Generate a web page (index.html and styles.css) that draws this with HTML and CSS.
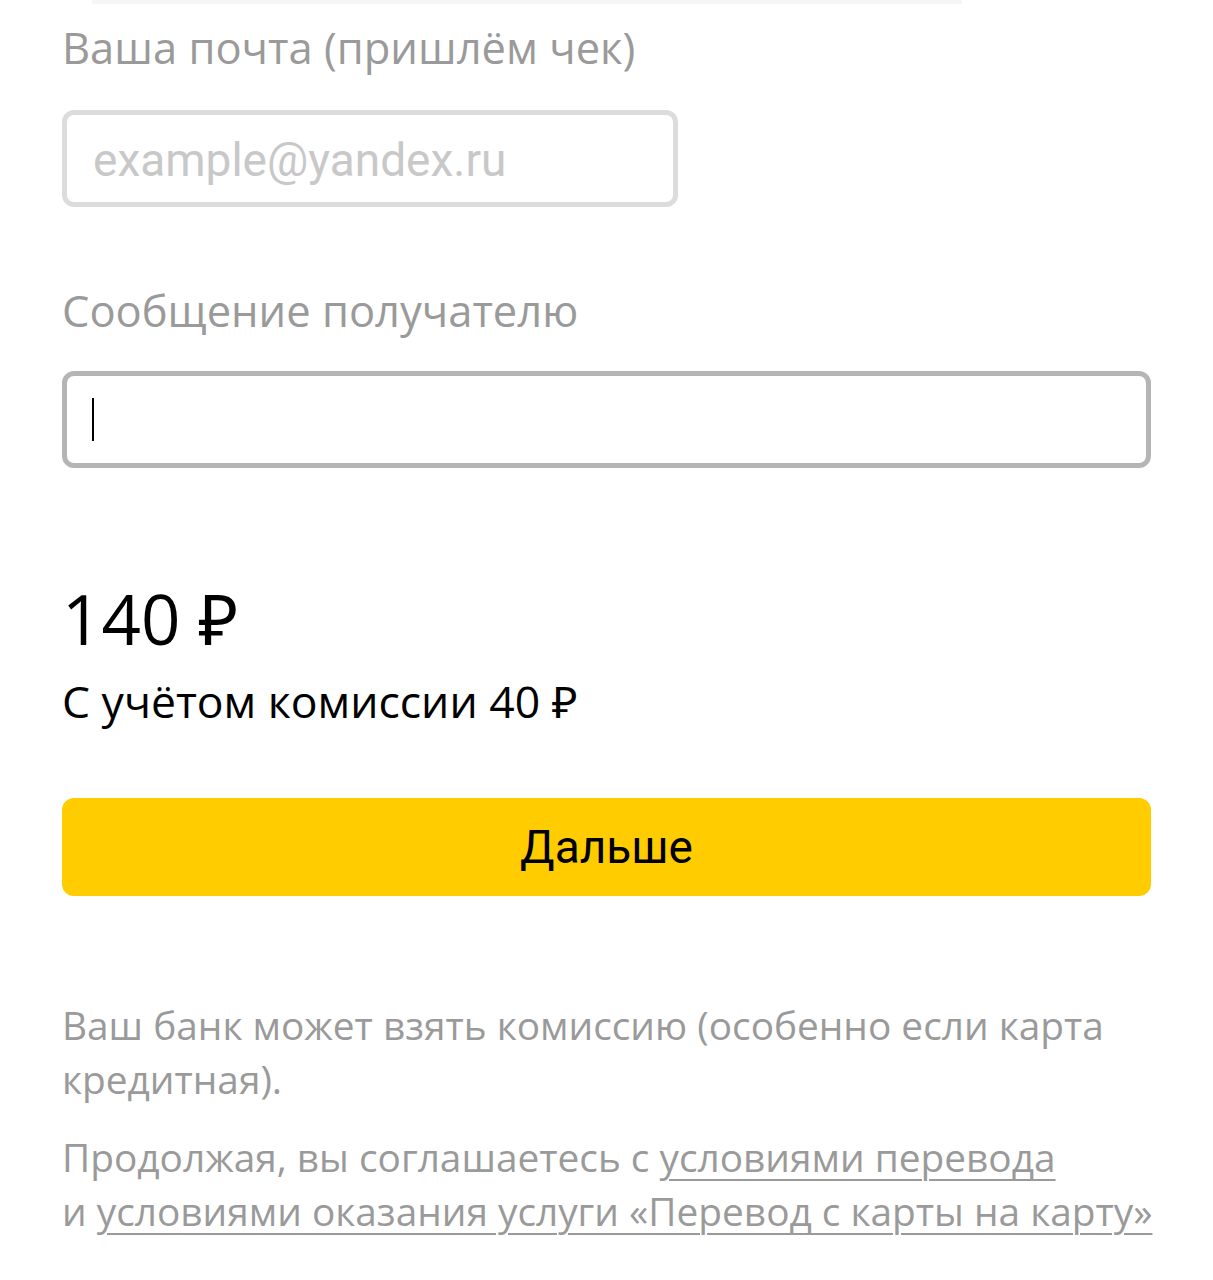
FILE: index.html
```html
<!DOCTYPE html>
<html lang="ru">
<head>
<meta charset="utf-8">
<title>Перевод</title>
<link rel="stylesheet" href="styles.css">
</head>
<body>
<div class="top-remnant"></div>
<main class="form">
  <label class="label label-email">Ваша почта (пришлём чек)</label>
  <div class="input input-email"><span class="placeholder">example@yandex.ru</span></div>

  <label class="label label-message">Сообщение получателю</label>
  <div class="input input-message is-focused"><span class="cursor"></span></div>

  <div class="total">140 ₽</div>
  <div class="commission">С учётом комиссии 40 ₽</div>

  <button class="btn-next" type="button">Дальше</button>

  <p class="note note-bank">Ваш банк может взять комиссию (особенно если карта<br>кредитная).</p>
  <p class="note note-terms">Продолжая, вы соглашаетесь с <a href="#">условиями перевода</a><br>и <a href="#">условиями оказания услуги «Перевод с карты на карту»</a></p>
</main>
</body>
</html>
```

FILE: styles.css
```css
html, body {
  margin: 0;
  padding: 0;
  background: #ffffff;
}

body {
  font-family: "Open Sans", "Noto Sans", sans-serif;
  color: #000;
  position: relative;
  overflow: hidden;
}

.top-remnant {
  position: absolute;
  top: 0;
  left: 92px;
  width: 870px;
  height: 4px;
  background: #f6f6f6;
}

.form {
  display: flex;
  flex-direction: column;
  align-items: flex-start;
  padding: 22px 0 0 62px;
  width: 1089px;
}

.label {
  display: block;
  font-size: 43.5px;
  line-height: 52px;
  color: #9a9a9a;
}

.input {
  box-sizing: border-box;
  height: 97px;
  border-radius: 12px;
  border: 5px solid #dcdcdc;
  background: #fff;
  display: flex;
  align-items: center;
  padding-left: 26px;
}

.input-email {
  width: 616px;
  margin-top: 36px;
}

.placeholder {
  font-family: Roboto, "Liberation Sans", sans-serif;
  font-size: 46px;
  color: #c8c8c8;
  line-height: 1;
  margin-top: 2px;
}

.label-message {
  margin-top: 78px;
}

.input-message {
  width: 1089px;
  margin-top: 34px;
  border-color: #b5b5b5;
  padding-left: 25px;
}

.cursor {
  display: block;
  width: 2px;
  height: 43px;
  background: #000;
}

.total {
  margin-top: 110px;
  font-size: 69px;
  line-height: 80px;
  color: #000;
}

.commission {
  margin-top: 18px;
  font-size: 44.5px;
  line-height: 50px;
  color: #000;
}

.btn-next {
  margin-top: 72px;
  width: 1089px;
  height: 98px;
  border: 0;
  border-radius: 12px;
  background: #ffcc00;
  font-family: Roboto, "Liberation Sans", sans-serif;
  font-size: 46px;
  color: #000;
  padding: 0;
  display: flex;
  align-items: center;
  justify-content: center;
}

.note {
  margin: 0;
  font-size: 38.8px;
  line-height: 54px;
  color: #9a9a9a;
  white-space: nowrap;
}

.note-bank {
  margin-top: 102px;
}

.note-terms {
  margin-top: 24px;
}

.note a {
  color: #9a9a9a;
  text-decoration: underline;
  text-decoration-thickness: 2px;
  text-underline-offset: 7px;
}
```
